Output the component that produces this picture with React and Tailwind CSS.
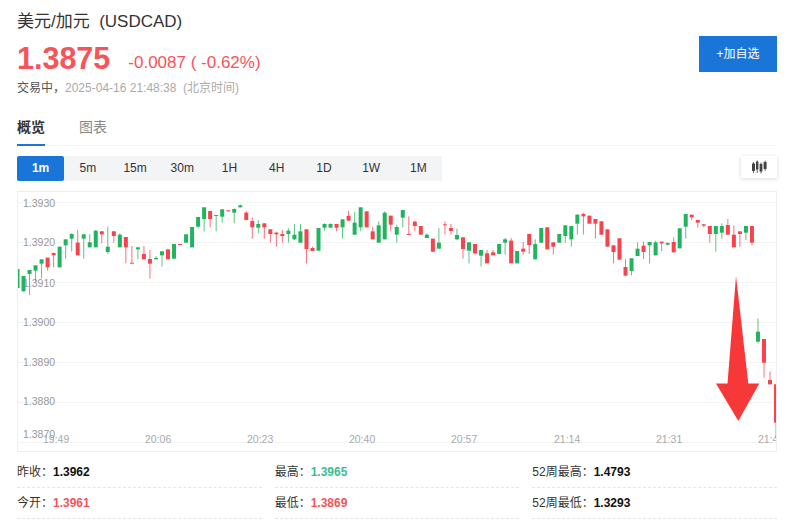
import React from 'react';

const FONT = "font-['Liberation_Sans','Noto_Sans_CJK_SC',sans-serif]";
const GREEN = '#22b35e';
const RED = '#f7434c';

// velas: [color, mecha arriba, mecha abajo, cuerpo arriba, cuerpo abajo]
// valores en unidades de 1/3 px, medidos desde y=190
const candles = [
  ['g', 237, 294, 237, 294], ['g', 258, 304, 258, 304], ['g', 240, 315, 240, 252], ['g', 226, 275, 226, 242],
  ['g', 208, 265, 208, 221], ['r', 203, 242, 203, 232], ['r', 188, 232, 189, 196], ['g', 170, 232, 170, 232],
  ['g', 148, 206, 148, 166], ['g', 130, 184, 132, 146], ['r', 120, 196, 158, 196], ['g', 133, 206, 133, 146],
  ['g', 133, 172, 157, 172], ['g', 120, 172, 122, 172], ['r', 123, 160, 124, 133], ['g', 110, 192, 170, 186],
  ['r', 123, 158, 124, 138], ['g', 130, 172, 134, 172], ['r', 141, 220, 141, 172], ['r', 168, 220, 218, 220],
  ['g', 171, 207, 172, 178], ['r', 168, 208, 192, 208], ['r', 180, 266, 207, 221], ['g', 198, 208, 204, 208],
  ['g', 183, 230, 184, 196], ['r', 178, 208, 178, 208], ['g', 162, 206, 162, 206], ['r', 162, 164, 162, 164],
  ['g', 133, 158, 133, 158], ['g', 111, 172, 111, 172], ['g', 80, 115, 81, 110], ['g', 52, 124, 52, 87],
  ['r', 62, 112, 63, 87], ['g', 75, 124, 75, 77], ['g', 58, 98, 58, 80], ['r', 61, 64, 61, 64],
  ['g', 55, 100, 57, 68], ['g', 43, 52, 46, 52], ['r', 62, 90, 68, 90], ['r', 82, 146, 93, 112],
  ['g', 90, 130, 102, 113], ['r', 100, 146, 100, 112], ['r', 118, 158, 118, 132], ['r', 125, 170, 128, 133],
  ['r', 120, 158, 132, 138], ['g', 115, 158, 122, 132], ['g', 102, 150, 134, 148], ['g', 102, 158, 124, 158],
  ['r', 118, 220, 118, 177], ['r', 170, 183, 174, 183], ['g', 114, 182, 114, 182], ['g', 100, 122, 102, 113],
  ['g', 100, 113, 102, 113], ['r', 102, 124, 102, 113], ['g', 88, 146, 88, 112], ['r', 62, 94, 78, 92],
  ['g', 66, 134, 98, 134], ['g', 52, 124, 52, 112], ['r', 64, 112, 64, 112], ['r', 110, 148, 124, 148],
  ['g', 94, 158, 106, 158], ['g', 64, 148, 68, 148], ['r', 77, 124, 77, 104], ['g', 104, 158, 111, 134],
  ['g', 60, 112, 60, 83], ['r', 79, 133, 132, 134], ['r', 92, 124, 95, 108], ['r', 108, 134, 108, 134],
  ['g', 130, 144, 134, 144], ['r', 146, 185, 146, 185], ['g', 114, 176, 158, 176], ['r', 94, 134, 103, 106],
  ['r', 102, 134, 114, 123], ['g', 116, 150, 135, 148], ['r', 142, 206, 142, 177], ['g', 157, 220, 157, 182],
  ['r', 162, 194, 162, 190], ['g', 180, 230, 180, 197], ['r', 180, 220, 190, 220], ['r', 180, 196, 187, 196],
  ['g', 162, 192, 162, 192], ['g', 144, 194, 148, 158], ['r', 144, 220, 152, 220], ['g', 183, 220, 183, 220],
  ['r', 156, 194, 176, 185], ['r', 132, 192, 132, 165], ['g', 148, 208, 162, 208], ['g', 114, 158, 114, 158],
  ['r', 112, 178, 112, 178], ['r', 156, 194, 157, 170], ['g', 132, 158, 132, 158], ['g', 106, 158, 106, 138],
  ['g', 108, 170, 108, 148], ['g', 73, 134, 74, 101], ['r', 68, 134, 72, 79], ['r', 77, 101, 77, 101],
  ['r', 87, 146, 87, 101], ['r', 94, 134, 94, 134], ['r', 118, 170, 118, 170], ['r', 165, 220, 166, 186],
  ['r', 145, 209, 145, 209], ['r', 208, 257, 231, 257], ['g', 205, 256, 205, 243], ['g', 157, 198, 176, 198],
  ['r', 155, 207, 167, 186], ['g', 156, 220, 156, 166], ['g', 152, 196, 157, 196], ['r', 155, 184, 155, 160],
  ['g', 157, 166, 159, 164], ['r', 142, 187, 156, 187], ['g', 115, 175, 115, 175], ['g', 72, 146, 72, 110],
  ['r', 74, 90, 74, 82], ['r', 90, 113, 90, 98], ['r', 102, 112, 103, 107], ['r', 108, 158, 108, 132],
  ['g', 108, 185, 108, 132], ['g', 100, 146, 108, 128], ['r', 87, 134, 105, 134], ['r', 106, 172, 134, 172],
  ['r', 124, 170, 124, 132], ['g', 108, 150, 108, 128], ['r', 108, 166, 108, 158], ['g', 385, 460, 425, 455],
  ['r', 447, 563, 447, 518], ['r', 545, 583, 570, 583], ['r', 583, 745, 583, 698],
];

const yLabels = [
  ['1.3930', 206.5], ['1.3920', 246], ['1.3910', 287], ['1.3900', 326],
  ['1.3890', 366], ['1.3880', 405], ['1.3870', 438],
];
const gridLines = [202, 242, 282, 322, 362, 402, 442];
const xLabels = [
  ['19:49', 43], ['20:06', 145], ['20:23', 247], ['20:40', 349],
  ['20:57', 451], ['21:14', 554], ['21:31', 656], ['21:48', 758],
];

const intervals = ['1m', '5m', '15m', '30m', '1H', '4H', '1D', '1W', '1M'];

const stats = [
  ['昨收：', '1.3962', 'text-[#111111]'],
  ['最高：', '1.3965', 'text-[#3ebb94]'],
  ['52周最高：', '1.4793', 'text-[#111111]'],
  ['今开：', '1.3961', 'text-[#f5545b]'],
  ['最低：', '1.3869', 'text-[#f5545b]'],
  ['52周最低：', '1.3293', 'text-[#111111]'],
];

const Chart = () => (
  <svg viewBox="18 192 758 259" className="block w-full h-full">
    {gridLines.map((y) => (
      <line key={y} x1="17" x2="777" y1={y + 0.5} y2={y + 0.5} stroke="#f3f3f3" />
    ))}
    {yLabels.map(([t, y]) => (
      <text key={t} x="23" y={y} fontSize="10.5" fill="#999999">{t}</text>
    ))}
    {xLabels.map(([t, x]) => (
      <text key={t} x={x} y="442.5" fontSize="10.5" fill="#aaaaaa">{t}</text>
    ))}
    {candles.map(([c, wt, wb, bt, bb], i) => {
      const x = 17.5 + 6.02 * i;
      const color = c === 'g' ? GREEN : RED;
      return (
        <g key={i} fill={color}>
          <rect x={x - 0.5} y={190 + wt / 3} width="1" height={(wb - wt) / 3} opacity="0.75" />
          <rect x={x - 2} y={190 + bt / 3} width="4" height={Math.max((bb - bt) / 3, 1)} />
        </g>
      );
    })}
    <polygon points="736,276 727.5,383.5 716,383.5 738.3,421 759.3,383.5 748.3,383.5" fill="#f73838" />
  </svg>
);

const CandleIcon = () => (
  <svg viewBox="0 0 16 14" className="w-4 h-[14px]" fill="#444444">
    <rect x="1" y="3.5" width="3" height="7.5" />
    <rect x="2.1" y="2" width="0.8" height="11" />
    <rect x="5" y="1.5" width="2.4" height="8" />
    <rect x="5.8" y="0.5" width="0.8" height="12.5" />
    <rect x="8.6" y="4" width="2.8" height="7.5" />
    <rect x="9.6" y="2.5" width="0.8" height="11" />
    <rect x="12.6" y="2" width="3" height="7" />
    <rect x="13.7" y="0.5" width="0.8" height="10.5" />
  </svg>
);

export default function App() {
  return (
    <div className={`w-[800px] h-[520px] bg-white overflow-hidden pl-[17px] pr-[23px] ${FONT}`}>
      <div className="flex justify-between">
        <div>
          <div className="h-[44px] flex items-center text-[17px] text-[#333333] whitespace-pre">美元/加元  (USDCAD)</div>
          <div className="h-[30px] flex items-center text-[#f5545b]">
            <span className="text-[30.5px] font-bold">1.3875</span>
            <span className="ml-[18px] mt-[7px] text-[17px]">-0.0087 ( -0.62%)</span>
          </div>
          <div className="h-[28px] flex items-center text-[12px] text-[#aaaaaa] whitespace-pre">
            <span className="text-[#555555]">交易中，</span>
            <span>2025-04-16 21:48:38  (北京时间)</span>
          </div>
        </div>
        <button className="mt-[36px] w-[78px] h-[36px] bg-[#1976d8] text-white text-[12px]">+加自选</button>
      </div>

      <div className="mt-[11px] h-[33px] flex gap-[34px] border-b border-[#f3f3f3] text-[14px]">
        <div className="h-[33px] w-[28px] pt-[4px] border-b-[2px] border-[#1976d8] font-bold text-[#333333] whitespace-nowrap">概览</div>
        <div className="pt-[4px] text-[#888888]">图表</div>
      </div>

      <div className="mt-[10px] flex justify-between items-start">
        <div className="flex w-[425px] h-[25px] bg-[#f3f4f6] text-[12px] text-[#333333]">
          {intervals.map((t, i) => (
            <div
              key={t}
              className={i === 0
                ? 'flex-1 flex items-center justify-center pb-[1px] rounded-[2px] bg-[#1976d8] text-white font-bold'
                : 'flex-1 flex items-center justify-center pb-[1px]'}
            >
              {t}
            </div>
          ))}
        </div>
        <div className="w-[36px] h-[22px] flex items-center justify-center bg-white shadow-[0_1px_4px_rgba(0,0,0,0.15)]">
          <CandleIcon />
        </div>
      </div>

      <div className="mt-[10px] h-[261px] border border-[#eeeeee] overflow-hidden">
        <Chart />
      </div>

      <div className="mt-[5px] grid grid-cols-3 gap-x-[13px] text-[12px] text-[#333333]">
        {stats.map(([label, value, color]) => (
          <div key={label} className="h-[31px] flex items-center border-b border-dashed border-[#e5e5e5]">
            <span>{label}</span>
            <span className={`font-bold ${color}`}>{value}</span>
          </div>
        ))}
      </div>
    </div>
  );
}
